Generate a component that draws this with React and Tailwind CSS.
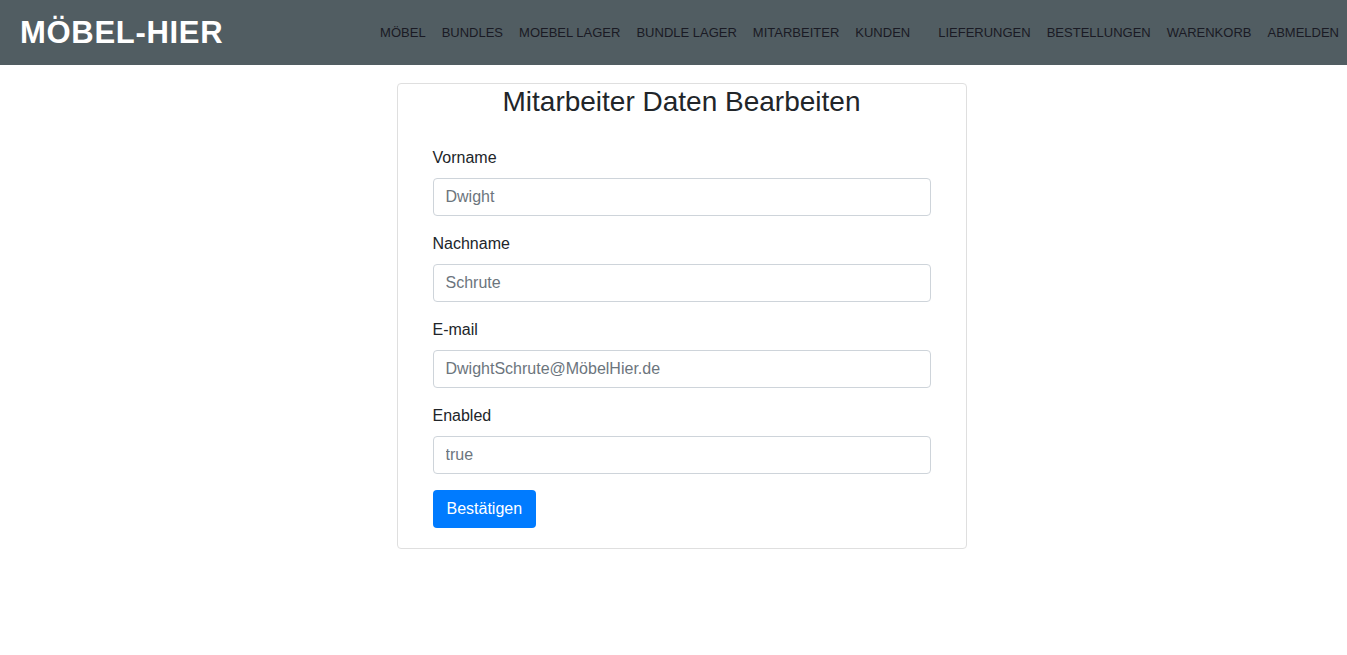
import React from 'react';

const NAV = [
  'MÖBEL',
  'BUNDLES',
  'MOEBEL LAGER',
  'BUNDLE LAGER',
  'MITARBEITER',
  'KUNDEN',
  '',
  'LIEFERUNGEN',
  'BESTELLUNGEN',
  'WARENKORB',
  'ABMELDEN',
];

const FIELDS = [
  { label: 'Vorname', value: 'Dwight' },
  { label: 'Nachname', value: 'Schrute' },
  { label: 'E-mail', value: 'DwightSchrute@MöbelHier.de' },
  { label: 'Enabled', value: 'true' },
];

export default function App() {
  return (
    <div className="min-h-screen bg-white font-['Liberation_Sans',Arial,sans-serif] text-[#212529]">
      <nav className="h-[65px] bg-[#515d62] flex items-center pl-5 pr-0">
        <div className="text-white font-bold text-[31px] tracking-[0.7px] leading-none">MÖBEL-HIER</div>
        <ul className="ml-auto flex items-center">
          {NAV.map((item, i) => (
            <li key={i} className={item ? 'px-2 text-[13px] text-[#1a1a24]' : 'w-3'}>
              {item}
            </li>
          ))}
        </ul>
      </nav>

      {/* card sits a little right of centre in the original */}
      <div className="flex justify-center pl-4 pt-[18px]">
        <div className="w-[570px] border border-[#dfdfdf] rounded-[4px] px-[35px] pb-5">
          <h2 className="text-center text-[28px] leading-[1.2] mt-[1px] mb-[27px]">Mitarbeiter Daten Bearbeiten</h2>
          <form>
            {FIELDS.map((f) => (
              <div key={f.label} className="mb-4">
                <label className="block text-[16px] leading-6 mb-2">{f.label}</label>
                <input
                  placeholder={f.value}
                  className="block w-full h-[38px] px-3 text-[16px] border border-[#ced4da] rounded-[4px] placeholder:text-[#6c757d] outline-none"
                />
              </div>
            ))}
            <button
              type="button"
              className="h-[38px] px-[14px] bg-[#007bff] text-white text-[16px] rounded-[4px]"
            >
              Bestätigen
            </button>
          </form>
        </div>
      </div>
    </div>
  );
}
